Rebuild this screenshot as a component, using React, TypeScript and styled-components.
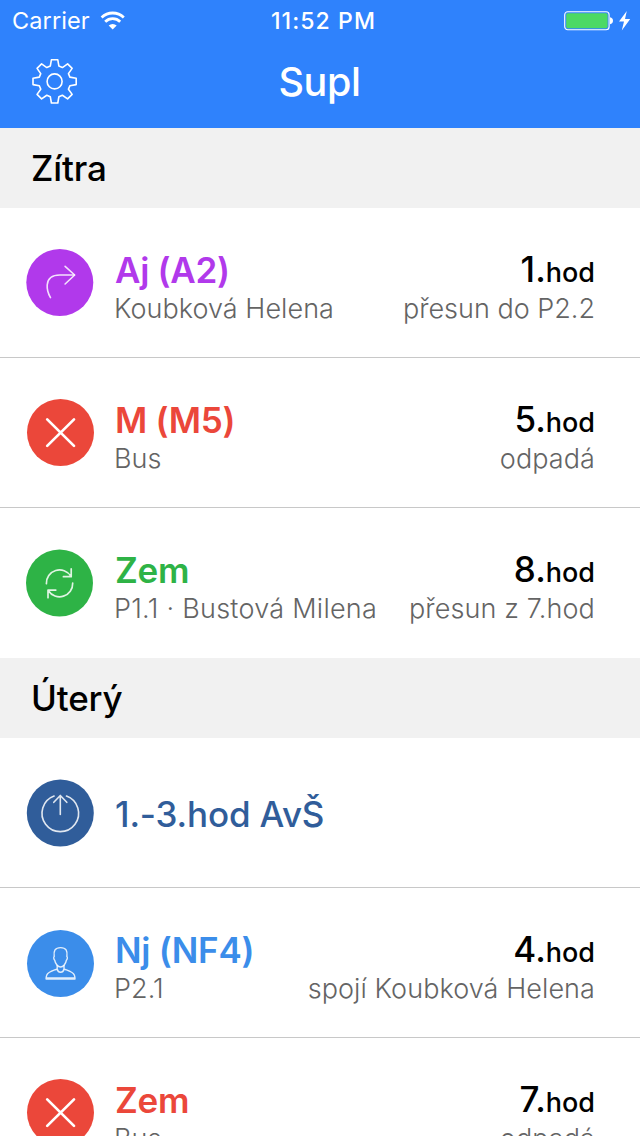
import React from "react";
import styled, { createGlobalStyle } from "styled-components";

const Global = createGlobalStyle`
  * { box-sizing: border-box; }
  html, body { margin: 0; height: 100%; overflow: hidden; background: #fff; }
  body { font-family: Inter, "Liberation Sans", sans-serif; -webkit-font-smoothing: antialiased; }
`;

const Screen = styled.div`
  width: 640px;
  height: 1136px;
  overflow: hidden;
  background: #fff;
`;

const Header = styled.header`
  height: 128px;
  background: #2f82fc;
  color: #fff;
`;

const StatusBar = styled.div`
  height: 40px;
  display: grid;
  grid-template-columns: 1fr auto 1fr;
  align-items: center;
  padding: 1px 9px 0 12px;
`;

const Carrier = styled.div`
  display: flex;
  align-items: center;
  gap: 10px;
  font-size: 23.5px;
  font-weight: 380;
  letter-spacing: 0.1px;
`;

const Clock = styled.div`
  font-size: 23px;
  font-weight: 530;
  letter-spacing: 1.1px;
  padding-left: 4px;
`;

const Power = styled.div`
  display: flex;
  justify-content: flex-end;
`;

const NavBar = styled.div`
  height: 88px;
  display: grid;
  grid-template-columns: 100px 1fr 100px;
  align-items: center;
  padding-bottom: 4px;
`;

const SettingsButton = styled.button`
  border: 0;
  background: none;
  padding: 0 0 0 31px;
  height: 48px;
  color: inherit;
  display: flex;
`;

const Title = styled.h1`
  margin: 0;
  text-align: center;
  font-size: 39.5px;
  font-weight: 470;
  letter-spacing: -0.4px;
  line-height: 48px;
  padding-right: 1px;
`;

const SectionHeader = styled.h2`
  margin: 0;
  height: 80px;
  padding: 0 31px;
  background: #f1f1f1;
  color: #000;
  font-size: 35px;
  font-weight: 450;
  letter-spacing: -0.15px;
  line-height: 80px;
`;

const Row = styled.div<{ $last?: boolean }>`
  height: 150px;
  display: flex;
  align-items: flex-start;
  padding: 0 45px 0 0;
  border-bottom: ${(p) => (p.$last ? "0" : "1px solid #c8c8c8")};
`;

const Badge = styled.svg`
  flex: none;
  display: block;
  width: 68px;
  height: 68px;
  margin: 41px 20px 0 26px;
`;

const Info = styled.div`
  flex: 1;
  padding-top: 42px;
  white-space: nowrap;
`;

const Subject = styled.div<{ $color: string }>`
  color: ${(p) => p.$color};
  font-size: 35px;
  font-weight: 570;
  line-height: 40px;
  letter-spacing: -0.3px;
  padding-left: 1px;
`;

const Event = styled.div`
  flex: 1;
  color: #305d9a;
  font-size: 35px;
  font-weight: 470;
  line-height: 40px;
  letter-spacing: -0.15px;
  padding: 56px 0 0 1px;
`;

const Detail = styled.div<{ $spacing: number }>`
  color: #646464;
  font-size: 27px;
  font-weight: 300;
  line-height: 37px;
  letter-spacing: ${(p) => p.$spacing}px;
`;

const Lesson = styled.div`
  padding-top: 41px;
  text-align: right;
  white-space: nowrap;
  ${Detail} { margin-top: 1px; }
`;

const Hour = styled.div`
  height: 40px;
  color: #000;
  font-size: 35px;
  font-weight: 550;
  line-height: 40px;
  span { font-size: 27px; line-height: 1; }
`;

const badges = {
  move: (
    <g strokeWidth="1.6">
      <path d="M24.2 48.6C21.2 43.5 20.6 40 20.9 36C21.4 29.5 26 26 33.5 26H48" />
      <path d="M38.8 17.3L48.4 26L38.8 35" />
    </g>
  ),
  cancel: <path strokeWidth="2.7" d="M20.2 20.4L47 46.9M47 20.4L20.2 46.9" />,
  swap: (
    <g strokeWidth="1.7">
      <path d="M20.4 34.2A13.2 13.2 0 0 1 44.8 26.6M45.2 19.4V27.2H37.4" />
      <path d="M46.7 33.6A13.2 13.2 0 0 1 22.4 41.2M22 48.2V40.6H29.8" />
    </g>
  ),
  event: (
    <g strokeWidth="1.6">
      <path d="M27.3 16.6A18.3 18.3 0 1 0 39.7 16.6" />
      <path d="M33.5 35V16M27 22.8L33.5 16L40 22.8" />
    </g>
  ),
  person: (
    <g strokeWidth="1.4">
      <path d="M27.2 26.5C26.4 21 28 17.6 33.6 17.6S40.6 21 39.9 26.5C40.7 27 40.4 29.3 39.4 30.2C38.8 34 36.2 37 33.6 37S28.3 34 27.7 30.2C26.7 29.3 26.4 27 27.2 26.5Z" />
      <path d="M30.2 35.5V39C25.5 40.8 21 41.8 19.8 45C19.2 46.6 19.1 47.8 19.1 49H48C48 47.8 47.9 46.6 47.3 45C46 41.8 41.6 40.8 37 39V35.5M30.2 39C31.2 43.4 36 43.4 37 39M19.4 47.9H47.8" />
    </g>
  ),
};

type Kind = keyof typeof badges;

const offsets: Record<Kind, [number, number]> = {
  move: [0.3, 0],
  cancel: [1, 0],
  swap: [0, 0.5],
  event: [0.8, 0.5],
  person: [1, 1],
};

function KindBadge({ kind, color }: { kind: Kind; color: string }) {
  return (
    <Badge viewBox="0 0 68 68" fill="none" stroke="#fff" strokeOpacity={kind === "cancel" ? 1 : 0.85} strokeLinecap="round" strokeLinejoin="round">
      <g transform={`translate(${offsets[kind].join(" ")})`}>
        <circle cx="33.5" cy="33.5" r="33.5" fill={color} stroke="none" />
        {badges[kind]}
      </g>
    </Badge>
  );
}

function Gear() {
  const points: string[] = [];
  for (let i = 0; i < 8; i++) {
    const a = (i * Math.PI) / 4;
    for (const [x, y] of [[-4.3, -15.3], [-3.2, -21.6], [3.2, -21.6], [4.3, -15.3]]) {
      points.push(`${(23.6 + x * Math.cos(a) - y * Math.sin(a)).toFixed(2)},${(23.4 + x * Math.sin(a) + y * Math.cos(a)).toFixed(2)}`);
    }
  }
  return (
    <svg width="48" height="48" viewBox="0 0 48 48" fill="none" stroke="#fff" strokeWidth="1.6" strokeLinejoin="round">
      <polygon points={points.join(" ")} />
      <circle cx="23.6" cy="23.4" r="7.5" />
    </svg>
  );
}

function Wifi() {
  return (
    <svg width="26" height="20" viewBox="0 0 26 20" fill="none" stroke="#fff" strokeWidth="2.8">
      <path d="M1.6 6.4A16.2 16.2 0 0 1 23.8 6.4" />
      <path d="M5.2 10.7A10.8 10.8 0 0 1 20.2 10.7" />
      <path d="M12.7 18.6L8.7 14.6A5.8 5.8 0 0 1 16.7 14.6Z" fill="#fff" stroke="none" />
    </svg>
  );
}

function Battery() {
  return (
    <svg width="67" height="20" viewBox="0 0 67 20">
      <rect x="0.7" y="0.7" width="44.4" height="18" rx="3" fill="none" stroke="#fff" strokeWidth="1.1" />
      <rect x="2.2" y="2.2" width="41.4" height="15" rx="1.6" fill="#4cd964" />
      <path d="M46 6.2Q49 7 49 9.7T46 13.2Z" fill="#fff" />
      <path d="M62.8 0L55 10.6H60L57.8 19.4L66.2 8H61Z" fill="#fff" />
    </svg>
  );
}

type Item = {
  kind: Kind;
  color: string;
  title: string;
  detail?: string;
  hour?: string;
  note?: string;
  detailSpacing?: number;
  noteSpacing?: number;
};

const days: { name: string; items: Item[] }[] = [
  {
    name: "Zítra",
    items: [
      { kind: "move", color: "#b139eb", title: "Aj (A2)", detail: "Koubková Helena", hour: "1", note: "přesun do P2.2", noteSpacing: 0 },
      { kind: "cancel", color: "#eb473a", title: "M (M5)", detail: "Bus", hour: "5", note: "odpadá" },
      { kind: "swap", color: "#2eb346", title: "Zem", detail: "P1.1 · Bustová Milena", hour: "8", note: "přesun z 7.hod", detailSpacing: 0.27, noteSpacing: 0.13 },
    ],
  },
  {
    name: "Úterý",
    items: [
      { kind: "event", color: "#305d9a", title: "1.-3.hod AvŠ" },
      { kind: "person", color: "#3b8dea", title: "Nj (NF4)", detail: "P2.1", hour: "4", note: "spojí Koubková Helena" },
      { kind: "cancel", color: "#eb473a", title: "Zem", detail: "Bus", hour: "7", note: "odpadá" },
    ],
  },
];

export default function App() {
  return (
    <Screen>
      <Global />
      <Header>
        <StatusBar>
          <Carrier>Carrier <Wifi /></Carrier>
          <Clock>11:52 PM</Clock>
          <Power><Battery /></Power>
        </StatusBar>
        <NavBar>
          <SettingsButton aria-label="Settings"><Gear /></SettingsButton>
          <Title>Supl</Title>
        </NavBar>
      </Header>
      {days.map((day) => (
        <section key={day.name}>
          <SectionHeader>{day.name}</SectionHeader>
          {day.items.map((item, i) => (
            <Row key={i} $last={i === day.items.length - 1}>
              <KindBadge kind={item.kind} color={item.color} />
              {item.hour ? (
                <>
                  <Info>
                    <Subject $color={item.color}>{item.title}</Subject>
                    <Detail $spacing={item.detailSpacing ?? 0.05}>{item.detail}</Detail>
                  </Info>
                  <Lesson>
                    <Hour>{item.hour}.<span>hod</span></Hour>
                    <Detail $spacing={item.noteSpacing ?? 0.08}>{item.note}</Detail>
                  </Lesson>
                </>
              ) : (
                <Event>{item.title}</Event>
              )}
            </Row>
          ))}
        </section>
      ))}
    </Screen>
  );
}
